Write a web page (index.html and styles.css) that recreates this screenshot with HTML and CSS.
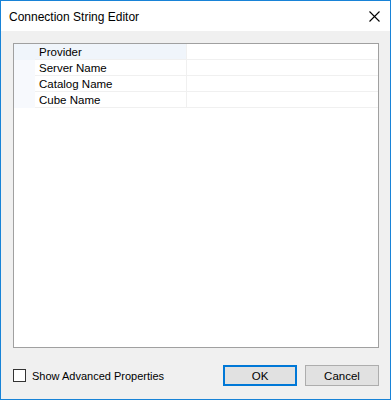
FILE: index.html
```html
<!DOCTYPE html>
<html lang="en">
<head>
    <meta charset="UTF-8">
    <title>Connection String Editor</title>
    <link rel="stylesheet" href="styles.css">
</head>
<body>

<div class="window">
    <div class="titlebar">
        <span class="title">Connection String Editor</span>
        <svg class="close" width="12" height="12" viewBox="0 0 12 12">
            <path d="M0.5 0.5 L10.5 10.5 M10.5 0.5 L0.5 10.5" stroke="#000" stroke-width="1.1" fill="none"/>
        </svg>
    </div>

    <div class="client">
        <div class="grid">
            <div class="row selected">
                <div class="margin"></div>
                <div class="name">Provider</div>
                <div class="value"></div>
            </div>
            <div class="row">
                <div class="margin"></div>
                <div class="name">Server Name</div>
                <div class="value"></div>
            </div>
            <div class="row">
                <div class="margin"></div>
                <div class="name">Catalog Name</div>
                <div class="value"></div>
            </div>
            <div class="row">
                <div class="margin"></div>
                <div class="name">Cube Name</div>
                <div class="value"></div>
            </div>
        </div>

        <div class="footer">
            <label class="check">
                <span class="box"></span>
                <span>Show Advanced Properties</span>
            </label>
            <div class="buttons">
                <button class="btn default">OK</button>
                <button class="btn">Cancel</button>
            </div>
        </div>
    </div>
</div>

</body>
</html>
```

FILE: styles.css
```css
body {
    margin: 0;
    font-family: "Liberation Sans", Arial, sans-serif;
    color: #000;
}
.window {
    width: 391px;
    height: 400px;
    box-sizing: border-box;
    border: 1px solid #1883d7;
    background: #f0f0f0;
    display: flex;
    flex-direction: column;
}
.titlebar {
    height: 30px;
    background: #fff;
    display: flex;
    align-items: center;
    justify-content: space-between;
    padding: 0 9px 0 8px;
}
.title {
    font-size: 12px;
    padding-top: 1px;
}
.close {
    display: block;
    margin-top: 1px;
}
.client {
    flex: 1;
    display: flex;
    flex-direction: column;
    padding: 12px 11px 12px 12px;
}
.grid {
    height: 305px;
    box-sizing: border-box;
    border: 1px solid #a0a0a0;
    background: #fff;
}
.row {
    display: flex;
    height: 16px;
    font-size: 11.5px;
}
.margin {
    width: 21px;
    background: #f7f9fd;
}
.name {
    width: 152px;
    padding: 2px 0 0 4px;
    box-sizing: border-box;
    line-height: 13px;
    border-bottom: 1px solid #f0f0f0;
    border-right: 1px solid #f0f0f0;
}
.value {
    flex: 1;
    border-bottom: 1px solid #f0f0f0;
}
.row.selected .name {
    background: #f0f5fb;
}
.row.selected .margin {
    background: #f0f5fb;
}
.footer {
    margin-top: 17px;
    display: flex;
    align-items: center;
    justify-content: space-between;
}
.check {
    display: flex;
    align-items: center;
    font-size: 11px;
    padding-top: 1px;
}
.box {
    width: 11px;
    height: 11px;
    border: 1px solid #333;
    background: #fff;
    margin: -1px 6px 0 0;
}
.buttons {
    display: flex;
    gap: 8px;
}
.btn {
    width: 74px;
    height: 21px;
    box-sizing: border-box;
    border: 1px solid #adadad;
    background: #e1e1e1;
    font-family: "Liberation Sans", Arial, sans-serif;
    font-size: 11.5px;
    padding: 0;
    color: #000;
}
.btn.default {
    border: 2px solid #0078d7;
}
```
